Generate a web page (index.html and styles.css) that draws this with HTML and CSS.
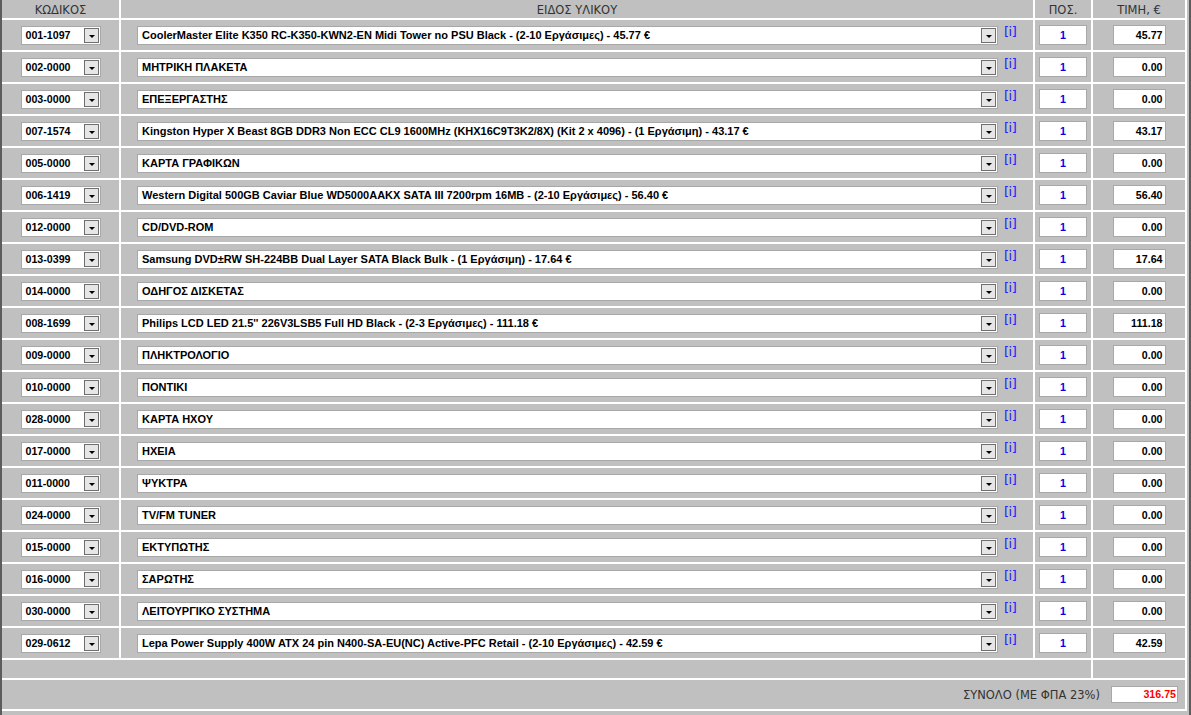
FILE: index.html
```html
<!DOCTYPE html>
<html lang="el">
<head>
<meta charset="utf-8">
<title>Σύνθεση υπολογιστή</title>
<link rel="stylesheet" href="styles.css">
</head>
<body>
<div class="frame">
  <div class="grid">
    <div class="hd">ΚΩΔΙΚΟΣ</div>
    <div class="hd">ΕΙΔΟΣ ΥΛΙΚΟΥ</div>
    <div class="hd">ΠΟΣ.</div>
    <div class="hd">ΤΙΜΗ, €</div>

    <div class="c"><div class="sel code"><span class="t">001-1097</span><span class="b"></span></div></div>
    <div class="c desc"><div class="sel item"><span class="t">CoolerMaster Elite K350 RC-K350-KWN2-EN Midi Tower no PSU Black - (2-10 Εργάσιμες) - 45.77 €</span><span class="b"></span></div><a class="info">[i]</a></div>
    <div class="c"><div class="qty">1</div></div>
    <div class="c"><div class="price">45.77</div></div>

    <div class="c"><div class="sel code"><span class="t">002-0000</span><span class="b"></span></div></div>
    <div class="c desc"><div class="sel item"><span class="t">ΜΗΤΡΙΚΗ ΠΛΑΚΕΤΑ</span><span class="b"></span></div><a class="info">[i]</a></div>
    <div class="c"><div class="qty">1</div></div>
    <div class="c"><div class="price">0.00</div></div>

    <div class="c"><div class="sel code"><span class="t">003-0000</span><span class="b"></span></div></div>
    <div class="c desc"><div class="sel item"><span class="t">ΕΠΕΞΕΡΓΑΣΤΗΣ</span><span class="b"></span></div><a class="info">[i]</a></div>
    <div class="c"><div class="qty">1</div></div>
    <div class="c"><div class="price">0.00</div></div>

    <div class="c"><div class="sel code"><span class="t">007-1574</span><span class="b"></span></div></div>
    <div class="c desc"><div class="sel item"><span class="t">Kingston Hyper X Beast 8GB DDR3 Non ECC CL9 1600MHz (KHX16C9T3K2/8X) (Kit 2 x 4096) - (1 Εργάσιμη) - 43.17 €</span><span class="b"></span></div><a class="info">[i]</a></div>
    <div class="c"><div class="qty">1</div></div>
    <div class="c"><div class="price">43.17</div></div>

    <div class="c"><div class="sel code"><span class="t">005-0000</span><span class="b"></span></div></div>
    <div class="c desc"><div class="sel item"><span class="t">ΚΑΡΤΑ ΓΡΑΦΙΚΩΝ</span><span class="b"></span></div><a class="info">[i]</a></div>
    <div class="c"><div class="qty">1</div></div>
    <div class="c"><div class="price">0.00</div></div>

    <div class="c"><div class="sel code"><span class="t">006-1419</span><span class="b"></span></div></div>
    <div class="c desc"><div class="sel item"><span class="t">Western Digital 500GB Caviar Blue WD5000AAKX SATA III 7200rpm 16MB - (2-10 Εργάσιμες) - 56.40 €</span><span class="b"></span></div><a class="info">[i]</a></div>
    <div class="c"><div class="qty">1</div></div>
    <div class="c"><div class="price">56.40</div></div>

    <div class="c"><div class="sel code"><span class="t">012-0000</span><span class="b"></span></div></div>
    <div class="c desc"><div class="sel item"><span class="t">CD/DVD-ROM</span><span class="b"></span></div><a class="info">[i]</a></div>
    <div class="c"><div class="qty">1</div></div>
    <div class="c"><div class="price">0.00</div></div>

    <div class="c"><div class="sel code"><span class="t">013-0399</span><span class="b"></span></div></div>
    <div class="c desc"><div class="sel item"><span class="t">Samsung DVD±RW SH-224BB Dual Layer SATA Black Bulk - (1 Εργάσιμη) - 17.64 €</span><span class="b"></span></div><a class="info">[i]</a></div>
    <div class="c"><div class="qty">1</div></div>
    <div class="c"><div class="price">17.64</div></div>

    <div class="c"><div class="sel code"><span class="t">014-0000</span><span class="b"></span></div></div>
    <div class="c desc"><div class="sel item"><span class="t">ΟΔΗΓΟΣ ΔΙΣΚΕΤΑΣ</span><span class="b"></span></div><a class="info">[i]</a></div>
    <div class="c"><div class="qty">1</div></div>
    <div class="c"><div class="price">0.00</div></div>

    <div class="c"><div class="sel code"><span class="t">008-1699</span><span class="b"></span></div></div>
    <div class="c desc"><div class="sel item"><span class="t">Philips LCD LED 21.5'' 226V3LSB5 Full HD Black - (2-3 Εργάσιμες) - 111.18 €</span><span class="b"></span></div><a class="info">[i]</a></div>
    <div class="c"><div class="qty">1</div></div>
    <div class="c"><div class="price">111.18</div></div>

    <div class="c"><div class="sel code"><span class="t">009-0000</span><span class="b"></span></div></div>
    <div class="c desc"><div class="sel item"><span class="t">ΠΛΗΚΤΡΟΛΟΓΙΟ</span><span class="b"></span></div><a class="info">[i]</a></div>
    <div class="c"><div class="qty">1</div></div>
    <div class="c"><div class="price">0.00</div></div>

    <div class="c"><div class="sel code"><span class="t">010-0000</span><span class="b"></span></div></div>
    <div class="c desc"><div class="sel item"><span class="t">ΠΟΝΤΙΚΙ</span><span class="b"></span></div><a class="info">[i]</a></div>
    <div class="c"><div class="qty">1</div></div>
    <div class="c"><div class="price">0.00</div></div>

    <div class="c"><div class="sel code"><span class="t">028-0000</span><span class="b"></span></div></div>
    <div class="c desc"><div class="sel item"><span class="t">ΚΑΡΤΑ ΗΧΟΥ</span><span class="b"></span></div><a class="info">[i]</a></div>
    <div class="c"><div class="qty">1</div></div>
    <div class="c"><div class="price">0.00</div></div>

    <div class="c"><div class="sel code"><span class="t">017-0000</span><span class="b"></span></div></div>
    <div class="c desc"><div class="sel item"><span class="t">ΗΧΕΙΑ</span><span class="b"></span></div><a class="info">[i]</a></div>
    <div class="c"><div class="qty">1</div></div>
    <div class="c"><div class="price">0.00</div></div>

    <div class="c"><div class="sel code"><span class="t">011-0000</span><span class="b"></span></div></div>
    <div class="c desc"><div class="sel item"><span class="t">ΨΥΚΤΡΑ</span><span class="b"></span></div><a class="info">[i]</a></div>
    <div class="c"><div class="qty">1</div></div>
    <div class="c"><div class="price">0.00</div></div>

    <div class="c"><div class="sel code"><span class="t">024-0000</span><span class="b"></span></div></div>
    <div class="c desc"><div class="sel item"><span class="t">TV/FM TUNER</span><span class="b"></span></div><a class="info">[i]</a></div>
    <div class="c"><div class="qty">1</div></div>
    <div class="c"><div class="price">0.00</div></div>

    <div class="c"><div class="sel code"><span class="t">015-0000</span><span class="b"></span></div></div>
    <div class="c desc"><div class="sel item"><span class="t">ΕΚΤΥΠΩΤΗΣ</span><span class="b"></span></div><a class="info">[i]</a></div>
    <div class="c"><div class="qty">1</div></div>
    <div class="c"><div class="price">0.00</div></div>

    <div class="c"><div class="sel code"><span class="t">016-0000</span><span class="b"></span></div></div>
    <div class="c desc"><div class="sel item"><span class="t">ΣΑΡΩΤΗΣ</span><span class="b"></span></div><a class="info">[i]</a></div>
    <div class="c"><div class="qty">1</div></div>
    <div class="c"><div class="price">0.00</div></div>

    <div class="c"><div class="sel code"><span class="t">030-0000</span><span class="b"></span></div></div>
    <div class="c desc"><div class="sel item"><span class="t">ΛΕΙΤΟΥΡΓΙΚΟ ΣΥΣΤΗΜΑ</span><span class="b"></span></div><a class="info">[i]</a></div>
    <div class="c"><div class="qty">1</div></div>
    <div class="c"><div class="price">0.00</div></div>

    <div class="c"><div class="sel code"><span class="t">029-0612</span><span class="b"></span></div></div>
    <div class="c desc"><div class="sel item"><span class="t">Lepa Power Supply 400W ATX 24 pin N400-SA-EU(NC) Active-PFC Retail - (2-10 Εργάσιμες) - 42.59 €</span><span class="b"></span></div><a class="info">[i]</a></div>
    <div class="c"><div class="qty">1</div></div>
    <div class="c"><div class="price">42.59</div></div>

    <div class="c span3"></div>
    <div class="c"></div>

    <div class="c span4 total">
      <span class="total-label">ΣΥΝΟΛΟ (ΜΕ ΦΠΑ 23%)</span>
      <div class="total-box">316.75</div>
    </div>
  </div>
</div>
</body>
</html>
```

FILE: styles.css
```css
html, body {
  margin: 0;
  padding: 0;
  background: #c0c0c0;
}

body {
  font-family: "Liberation Sans", Arial, sans-serif;
  height: 715px;
  overflow: hidden;
}

.frame {
  background: #c0c0c0;
  border-left: 2px solid #5c5c5c;
  border-right: 2px solid #5c5c5c;
  padding-right: 2px;
  height: 715px;
}

.grid {
  display: grid;
  grid-template-columns: 117px 912px 56px 92px;
  grid-template-rows: 18px repeat(20, 30px) 18px 29px;
  gap: 2px;
  background: #ffffff;
  padding: 0 2px 2px 0;
  width: 1183px;
}

.hd {
  background: #c0c0c0;
  font-family: "DejaVu Sans", Verdana, sans-serif;
  font-size: 11.5px;
  color: #333333;
  display: flex;
  align-items: center;
  justify-content: center;
  padding-top: 1px;
}

.c {
  background: #c0c0c0;
  display: flex;
  align-items: center;
  justify-content: center;
}

.span3 { grid-column: span 3; }
.span4 { grid-column: span 4; }

.sel {
  display: flex;
  height: 19px;
  box-sizing: border-box;
  border: 1px solid #a8a8a8;
  background: #ffffff;
}

.sel .t {
  flex: 1;
  font-size: 8pt;
  font-weight: bold;
  color: #000000;
  line-height: 17px;
  padding-left: 4px;
  white-space: nowrap;
  overflow: hidden;
}

.item .t {
  font-size: 11px;
}

.sel .b {
  width: 15px;
  height: 15px;
  margin: 1px 1px 0 0;
  box-sizing: border-box;
  border: 1px solid #6e6e6e;
  background: #e6e6e6;
  position: relative;
}

.sel .b::after {
  content: "";
  position: absolute;
  left: 4px;
  top: 6px;
  border-left: 3px solid transparent;
  border-right: 3px solid transparent;
  border-top: 3px solid #000000;
}

.code { width: 80px; }
.item { width: 861px; }

.desc {
  gap: 6px;
}

.info {
  font-family: "DejaVu Sans", Verdana, sans-serif;
  font-size: 13px;
  line-height: 15px;
  color: #2020ff;
  align-self: flex-start;
  margin-top: 4px;
  width: 13px;
  letter-spacing: -0.5px;
  cursor: pointer;
}

.qty, .price, .total-box {
  height: 20px;
  box-sizing: border-box;
  border: 1px solid #a8a8a8;
  background: #ffffff;
  font-size: 8pt;
  font-weight: bold;
  line-height: 18px;
}

.qty {
  width: 48px;
  text-align: center;
  color: #0000e6;
}

.price {
  width: 53px;
  text-align: right;
  padding-right: 2px;
  color: #000000;
}

.total {
  justify-content: flex-end;
  padding-right: 7px;
  gap: 11px;
}

.total-label {
  font-family: "DejaVu Sans", Verdana, sans-serif;
  font-size: 11.5px;
  color: #333333;
}

.total-box {
  width: 67px;
  height: 17px;
  line-height: 15px;
  text-align: right;
  padding-right: 1px;
  color: #ff0000;
}
```
